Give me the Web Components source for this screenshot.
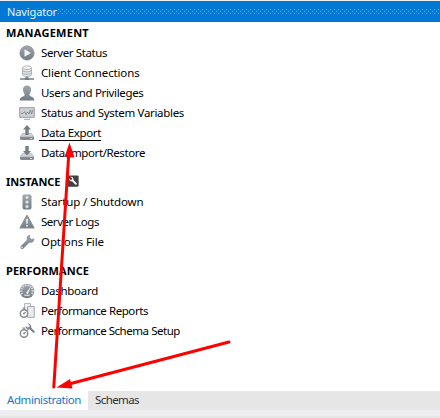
<!DOCTYPE html>
<html lang="en">
<head>
<meta charset="utf-8">
<title>Navigator</title>
<style>
html,body{margin:0;height:100%;overflow:hidden;background:#fff}
</style>
</head>
<body>
<nav-panel></nav-panel>
<script>
const defs = `<defs><linearGradient id="g" x1="0" y1="0" x2="0" y2="1"><stop offset="0" stop-color="#a0a6ad"/><stop offset="1" stop-color="#747c86"/></linearGradient></defs>`;
const watch = `<circle cx="5" cy="10.5" r="3.7" fill="#fff" stroke="#868d96" stroke-width="1.5"/><path d="M3.500 5h3M5 5v2M5 10.500l1.800-1.400M8 6.500l1 1" stroke="#868d96" stroke-width="1.200"/><circle cx="5" cy="10.500" r="1" fill="#868d96"/>`;
const drive = `<path d="M3.500 8.500h9l2.500 3.500H1z" fill="#cfd2d5" stroke="#a0a5ab" stroke-width=".6"/><path d="M1 12h14v1.500q0 1.500-1.500 1.500h-11Q1 15 1 13.500z" fill="#838a92"/><path d="M11 13.500h2" stroke="#d5d8db"/>`;
const icons = {
 play: `<circle cx="8" cy="8" r="7.200" fill="url(#g)" stroke="#858c95" stroke-width=".6"/><path d="M5.500 4.200v7.600L12 8z" fill="#f4f5f6"/>`,
 db: `<path d="M3.500 2.700v7c0 2.400 9 2.400 9 0v-7" fill="#e5e7e9" stroke="#a1a6ab" stroke-width=".8"/><ellipse cx="8" cy="2.700" rx="4.500" ry="1.800" fill="#f4f5f6" stroke="#a1a6ab" stroke-width=".8"/><path d="M3.500 5.200c0 2.300 9 2.300 9 0M3.500 7.600c0 2.300 9 2.300 9 0" fill="none" stroke="#a1a6ab" stroke-width=".9"/><path d="M8 11.500V14M1 14h14" stroke="#747d86" stroke-width="1.600"/><path d="M6 12.500h4v2.500H6z" fill="#747d86"/>`,
 user: `<path d="M8 .5c2.900 0 4.200 1.900 4 4.500-.1 2-1 3.200-1.600 4.200-.3 1.200.2 1.700 1.600 2.200 2 .6 3 1.300 3.300 4H.7c.3-2.700 1.300-3.400 3.300-4 1.400-.5 1.900-1 1.600-2.200C5 8.200 4.100 7 4 5 3.800 2.400 5.100.5 8 .5z" fill="url(#g)"/>`,
 monitor: `<path d="M.7 2.700h14.600v9.600H.7z" fill="#cfd2d5" stroke="#979da4"/><path d="M2 8.500h2l1.500-2 1.500 3 1.500-2.500 1.500 2 1.500-4 1 4 1.500-4" fill="none" stroke="#737b84" stroke-width=".8"/><path d="M5 14.300h6" stroke="#b0b4b9" stroke-width="1.200"/>`,
 exportIcon: drive + `<path d="M8 0l4 4.500H9.700V10H6.300V4.500H4z" fill="#757d86"/>`,
 importIcon: drive + `<path d="M8 10.500L4 6h2.300V1h3.400v5H12z" fill="#757d86"/>`,
 traffic: `<rect x="3.500" y=".5" width="9" height="15" rx="1.800" fill="url(#g)"/><g fill="#e2e4e6" stroke="#b5babf" stroke-width=".5"><circle cx="8" cy="3.500" r="1.600"/><circle cx="8" cy="8" r="1.600"/><circle cx="8" cy="12.500" r="1.600"/></g>`,
 warning: `<path d="M8 1.400L15 14H1z" fill="url(#g)" stroke="#868d95" stroke-width="1.200" stroke-linejoin="round"/><path d="M7 5h2l-.4 5H7.400zM7.100 11h1.800v1.600H7.100z" fill="#eceef0"/>`,
 wrench: `<path d="M11.300.7L10.900 3.500l1.500 1.600L15.300 4.500c.4 3-2.300 5-4.800 4.100L4.400 14.500c-1.700 1.600-4-.6-2.500-2.400L8 6.100C6.900 3.500 8.600.6 11.300.7z" fill="url(#g)"/><circle cx="3" cy="13.300" r=".8" fill="#fff"/>`,
 gauge: `<circle cx="8" cy="8" r="7.300" fill="url(#g)"/><path d="M3.200 11.200A5.700 5.700 0 1 1 12.800 11" fill="none" stroke="#d5d9dc" stroke-width="2" stroke-dasharray="1.500 1"/><path d="M7 10l4.500-6L9 11z" fill="#f4f5f6"/><path d="M5.200 12.300h5.600" stroke="#cdd1d5" stroke-width="1.500"/>`,
 reports: `<path d="M5.500.6h6v10h-6z" fill="#f2f3f4" stroke="#a9aeb3" stroke-width=".9"/><path d="M8.500 3.600h6.800v10.700H8.500z" fill="#e9ebec" stroke="#999fa5" stroke-width=".9"/>${watch}`,
 setup: `${watch}<path d="M8.400.6l2.200 1.600-.3 1.700-1.700.6L6.700 3c0 2.800 2.300 4 4 3.200l3.200 3.200c1.200.9 2.400-.3 1.500-1.500L12.200 4.800C12.700 2.200 10.700.1 8.400.6z" fill="#7b828b"/>`,
 badge: `<rect x=".5" y=".5" width="15" height="15" rx="1.500" fill="#414141"/><path d="M4.500 2.500L7 4.400 6.500 6 5 6.600 2.800 4.500c-.2 2.800 2 4.300 4 3.700l4.200 4.500c1.300 1.100 2.900-.5 1.800-1.800L8.600 6.600c.5-2.600-1.700-4.700-4.100-4.100z" fill="#fff"/>`
};
class FitText extends HTMLElement {
  connectedCallback(){
    const r=this.attachShadow({mode:'open'});
    r.innerHTML=`<style>:host{display:inline-block;white-space:pre}span{display:inline-block}</style><span></span>`;
    const s=r.querySelector('span');
    s.textContent=this.getAttribute('text');
    const n=s.textContent.length, w=s.getBoundingClientRect().width;
    s.style.letterSpacing=((+this.getAttribute('fit')-w)/n)+'px';
  }
}
class NavIcon extends HTMLElement {
  connectedCallback(){
    this.attachShadow({mode:'open'}).innerHTML=`<style>:host{display:block;width:16px;height:16px;flex:none}:host([name=badge]){width:12px;height:12px;margin-bottom:2px}svg{display:block;width:100%;height:100%}</style><svg viewBox="0 0 16 16" fill="none">${defs}${icons[this.getAttribute('name')]}</svg>`;
  }
}
class NavItem extends HTMLElement {
  connectedCallback(){
    this.attachShadow({mode:'open'}).innerHTML=`<style>:host{display:flex;height:20px;align-items:center;padding-left:19px;gap:6px;font-size:11.5px}
    :host([active]) .t{background:linear-gradient(#000,#000) 0 100%/100% 1px no-repeat}.t{height:15px;line-height:14px;display:flex;padding-left:2px;margin-left:-2px}</style>
    <nav-icon name="${this.getAttribute('icon')}"></nav-icon><div class="t"><fit-text text="${this.getAttribute('label')}" fit="${this.getAttribute('fit')}"></fit-text></div>`;
  }
}
class NavSection extends HTMLElement {
  connectedCallback(){
    this.attachShadow({mode:'open'}).innerHTML=`<style>:host{display:block;margin-bottom:9px}header{height:20px;line-height:20px;padding-left:6px;font-weight:700;display:flex;align-items:center;gap:6px}</style>
    <header><fit-text text="${this.getAttribute('label')}" fit="${this.getAttribute('fit')}"></fit-text><slot name="badge"></slot></header><slot></slot>`;
  }
}
class NavTitle extends HTMLElement {
  connectedCallback(){
    this.attachShadow({mode:'open'}).innerHTML=`<style>:host{display:flex;height:21px;padding-left:7px;background:#0078d4;color:#e8f3fc;align-items:center;line-height:20px}
    svg{display:block;flex:1;height:21px;margin-left:1px}</style><fit-text text="Navigator" fit="50"></fit-text><svg shape-rendering="crispEdges"><defs><pattern id="d" width="4" height="21" patternUnits="userSpaceOnUse"><path d="M0 8h1v1H0zM2 10h1v1H2zM0 12h1v1H0z" fill="#60adea"/></pattern></defs><rect width="100%" height="21" fill="url(#d)"/></svg>`;
  }
}
class NavTabs extends HTMLElement {
  connectedCallback(){
    this.attachShadow({mode:'open'}).innerHTML=`<style>:host{display:flex;height:19px;background:#e6e6e6;line-height:18px;font-size:11.5px;color:#303030}.a{width:81px;padding-left:7px;background:#fff;color:#1874cc}.b{padding-left:7px}</style><div class="a"><fit-text text="Administration" fit="74"></fit-text></div><div class="b"><fit-text text="Schemas" fit="44"></fit-text></div>`;
  }
}
class ArrowOverlay extends HTMLElement {
  connectedCallback(){
    this.attachShadow({mode:'open'}).innerHTML=`<style>:host{position:absolute;inset:0;pointer-events:none}svg{display:block}</style><svg width="440" height="418"><g stroke="#f00" stroke-width="3" stroke-linecap="round"><path d="M53.800 387L68.700 155M229 342L70 383.700"/></g><path d="M69.500 142.500L64.500 157L74.500 157.500zM56.500 387.500L70 379L72.500 388.500z" fill="#f00"/></svg>`;
  }
}
class NavPanel extends HTMLElement {
  connectedCallback(){
    this.attachShadow({mode:'open'}).innerHTML=`<style>:host{display:flex;flex-direction:column;position:relative;width:440px;height:418px;background:#fff;border-top:1px solid #eeeef0;box-sizing:border-box;font:11px "Noto Sans","Open Sans",sans-serif;color:#000}
    main{flex:1;padding-top:1px}footer{height:6px;background:#eeeef0;border-bottom:2px solid #e6e6e6}arrow-overlay{top:-1px}</style>
    <nav-title></nav-title><main>
    <nav-section label="MANAGEMENT" fit="83">
    <nav-item icon="play" label="Server Status" fit="66"></nav-item>
    <nav-item icon="db" label="Client Connections" fit="98.500"></nav-item>
    <nav-item icon="user" label="Users and Privileges" fit="102.500"></nav-item>
    <nav-item icon="monitor" label="Status and System Variables" fit="143"></nav-item>
    <nav-item icon="exportIcon" label="Data Export" fit="60" active></nav-item>
    <nav-item icon="importIcon" label="Data Import/Restore" fit="104"></nav-item></nav-section>
    <nav-section label="INSTANCE" fit="54.500"><nav-icon slot="badge" name="badge"></nav-icon>
    <nav-item icon="traffic" label="Startup / Shutdown" fit="102.500"></nav-item>
    <nav-item icon="warning" label="Server Logs" fit="58"></nav-item>
    <nav-item icon="wrench" label="Options File" fit="63"></nav-item></nav-section>
    <nav-section label="PERFORMANCE" fit="83">
    <nav-item icon="gauge" label="Dashboard" fit="57"></nav-item>
    <nav-item icon="reports" label="Performance Reports" fit="107"></nav-item>
    <nav-item icon="setup" label="Performance Schema Setup" fit="139"></nav-item></nav-section>
    </main><nav-tabs></nav-tabs><footer></footer><arrow-overlay></arrow-overlay>`;
  }
}
customElements.define('fit-text',FitText);
customElements.define('nav-icon',NavIcon);
customElements.define('nav-item',NavItem);
customElements.define('nav-section',NavSection);
customElements.define('nav-title',NavTitle);
customElements.define('nav-tabs',NavTabs);
customElements.define('arrow-overlay',ArrowOverlay);
customElements.define('nav-panel',NavPanel);
</script>
</body>
</html>
